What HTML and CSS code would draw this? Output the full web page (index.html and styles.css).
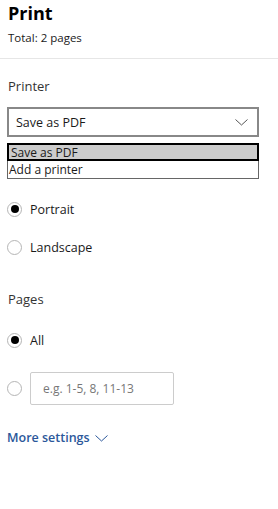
FILE: index.html
```html
<!DOCTYPE html>
<html>
<head>
<meta charset="utf-8">
<link rel="stylesheet" href="styles.css">
</head>
<body>
<header class="head">
  <h1 class="title">Print</h1>
  <p class="total">Total: 2 pages</p>
</header>
<main class="content">
  <h2 class="label printer-label">Printer</h2>
  <div class="select">
    <span>Save as PDF</span>
    <svg class="chev" width="13" height="7" viewBox="0 0 13 7"><path d="M0.5 0.5 L6.5 6 L12.5 0.5" fill="none" stroke="#555" stroke-width="1"/></svg>
  </div>
  <ul class="list">
    <li class="opt sel"><span>Save as PDF</span></li>
    <li class="opt"><span>Add a printer</span></li>
  </ul>
  <div class="radio-row first"><span class="radio on"></span><span>Portrait</span></div>
  <div class="radio-row"><span class="radio"></span><span>Landscape</span></div>
  <h2 class="label pages-label">Pages</h2>
  <div class="radio-row"><span class="radio on"></span><span>All</span></div>
  <div class="radio-row custom"><span class="radio"></span><span class="input">e.g. 1-5, 8, 11-13</span></div>
  <div class="more">More settings
    <svg width="13" height="7" viewBox="0 0 13 7"><path d="M0.5 0.5 L6.5 6 L12.5 0.5" fill="none" stroke="#2b579a" stroke-width="1"/></svg>
  </div>
</main>
</body>
</html>
```
FILE: styles.css
```css
html, body {
  margin: 0;
  padding: 0;
  background: #fff;
}
body {
  font-family: "Open Sans", "Noto Sans", sans-serif;
  color: #1a1a1a;
  width: 278px;
}
.head {
  padding: 1px 8px 0 8px;
  height: 57px;
  border-bottom: 1px solid #e6e6e6;
}
.title {
  margin: 0;
  font-size: 18px;
  font-weight: 700;
  line-height: 24px;
  color: #000;
}
.total {
  margin: 5px 0 0 0;
  font-size: 11.5px;
  line-height: 16px;
  color: #1a1a1a;
}
.content {
  padding: 0 0 0 7px;
}
.label {
  margin: 0;
  font-size: 13px;
  font-weight: 400;
  line-height: 20px;
  color: #333;
  padding-left: 1px;
}
.printer-label {
  margin-top: 17px;
}
.select {
  margin-top: 11px;
  box-sizing: border-box;
  width: 252px;
  height: 30px;
  border: 2px solid #888;
  display: flex;
  align-items: center;
  justify-content: space-between;
  padding: 0 9px 0 7px;
  font-size: 12.5px;
}
.chev {
  margin-top: 1px;
}
.list {
  list-style: none;
  margin: 6px 0 0 0;
  padding: 0;
  width: 252px;
  box-sizing: border-box;
  border: 1px solid #666;
  font-size: 12px;
}
.opt {
  box-sizing: border-box;
  height: 17px;
  display: flex;
  align-items: center;
  padding-left: 1px;
}
.opt span {
  line-height: 13px;
}
.opt.sel {
  background: #ccc;
  border: 2px solid #000;
  margin: -1px -1px 0 -1px;
  height: 18px;
  padding-left: 2px;
}
.radio-row {
  display: flex;
  align-items: center;
  height: 38px;
  gap: 8px;
  font-size: 12.5px;
}
.radio-row.first {
  margin-top: 11px;
}
.radio {
  box-sizing: border-box;
  width: 15px;
  height: 15px;
  border: 1px solid #b5b5b5;
  border-radius: 50%;
  display: flex;
  align-items: center;
  justify-content: center;
  flex: none;
}
.radio.on::after {
  content: "";
  width: 8px;
  height: 8px;
  border-radius: 50%;
  background: #000;
}
.pages-label {
  margin-top: 23px;
  margin-bottom: 12px;
}
.custom {
  margin-top: 13px;
  height: 32px;
}
.input {
  box-sizing: border-box;
  width: 144px;
  height: 33px;
  border: 1px solid #ccc;
  border-radius: 2px;
  display: flex;
  align-items: center;
  padding-left: 12px;
  color: #777;
  font-size: 12px;
}
.more {
  margin-top: 24px;
  display: flex;
  align-items: center;
  gap: 5px;
  font-size: 12.5px;
  font-weight: 600;
  color: #2b579a;
  line-height: 20px;
}
```
